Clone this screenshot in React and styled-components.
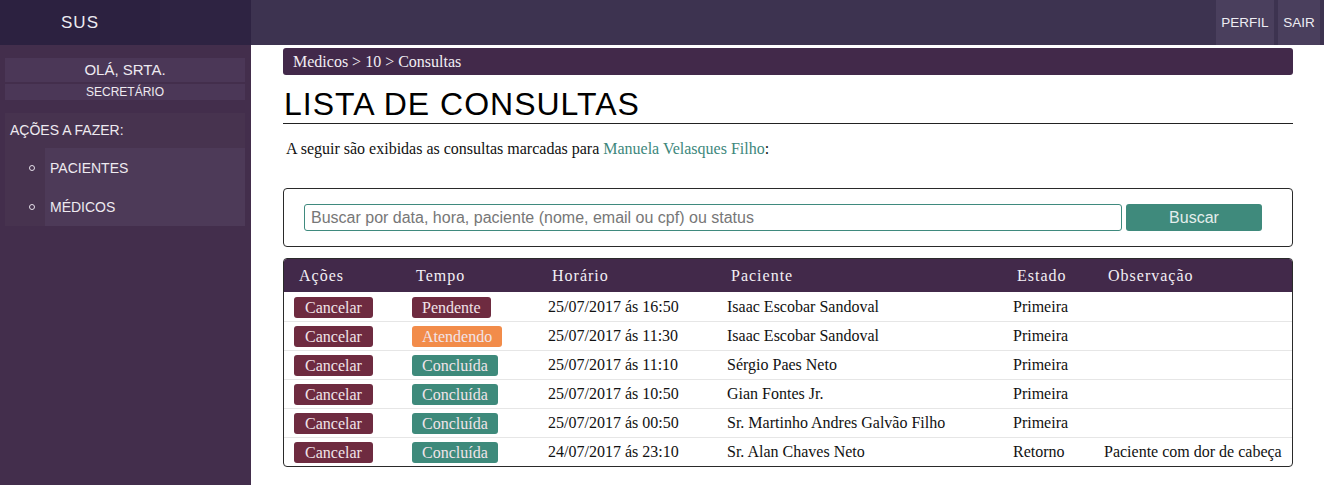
import React from 'react';
import styled, { createGlobalStyle } from 'styled-components';

const GlobalStyle = createGlobalStyle`
  body {
    margin: 0;
    background: #ffffff;
    font-family: "Liberation Serif", "Times New Roman", serif;
  }
`;

const Page = styled.div`
  display: flex;
  flex-direction: column;
  min-height: 485px;
`;

const TopBar = styled.div`
  display: flex;
  height: 45px;
  background: #3d3350;
`;

const Brand = styled.div`
  width: 160px;
  display: flex;
  align-items: center;
  justify-content: center;
  background: #2c2140;
  color: #ecebf2;
  font-family: "Liberation Sans", Arial, sans-serif;
  font-size: 17px;
  letter-spacing: 1px;
`;

const BrandFill = styled.div`
  width: 91px;
  background: #2e2342;
`;

const TopSpacer = styled.div`
  flex: 1;
`;

const TopLink = styled.div`
  display: flex;
  align-items: center;
  justify-content: center;
  width: ${p => p.$w}px;
  margin-left: ${p => p.$gap || 0}px;
  background: #4a3f5d;
  color: #eeedf3;
  font-family: "Liberation Sans", Arial, sans-serif;
  font-size: 13.5px;
`;

const TopEnd = styled.div`
  width: 4px;
`;

const Body = styled.div`
  display: flex;
  flex: 1;
`;

const Sidebar = styled.div`
  width: 251px;
  flex-shrink: 0;
  background: #432e4c;
  padding: 13px 6px 0 5px;
  box-sizing: border-box;
  display: flex;
  flex-direction: column;
  font-family: "Liberation Sans", Arial, sans-serif;
  color: #eeeaf0;
`;

const Greeting = styled.div`
  display: flex;
  flex-direction: column;
  gap: 2px;
  text-align: center;
`;

const GreetLine = styled.div`
  background: #4b3757;
  height: ${p => p.$h}px;
  line-height: ${p => p.$h}px;
  font-size: ${p => p.$size}px;
`;

const Actions = styled.div`
  margin-top: 13px;
  display: flex;
  flex-direction: column;
`;

const ActionsTitle = styled.div`
  background: #47334f;
  height: 35px;
  line-height: 35px;
  padding-left: 5px;
  font-size: 14px;
`;

const ActionItem = styled.div`
  display: flex;
  height: 39px;
  background: #47334f;
  font-size: 14px;
`;

const Bullet = styled.div`
  width: 40px;
  box-sizing: border-box;
  padding-left: 24px;
  display: flex;
  align-items: center;
  &::before {
    content: '';
    width: 4px;
    height: 4px;
    border: 1px solid #e6e0ea;
    border-radius: 50%;
  }
`;

const ItemLabel = styled.div`
  flex: 1;
  display: flex;
  align-items: center;
  background: #4d3a58;
  padding-left: 5px;
`;

const Main = styled.div`
  flex: 1;
  padding: 3px 31px 0 32px;
  display: flex;
  flex-direction: column;
`;

const Crumbs = styled.div`
  height: 27px;
  line-height: 27px;
  background: #42294a;
  border-radius: 3px;
  padding-left: 10px;
  color: #f2eef4;
  font-size: 16px;
`;

const Title = styled.h1`
  margin: 11px 0 0;
  padding: 0 0 1px 1px;
  font-family: "Liberation Sans", Arial, sans-serif;
  font-weight: normal;
  font-size: 32px;
  line-height: 36px;
  letter-spacing: 1px;
  color: #000;
  border-bottom: 1px solid #222;
`;

const Intro = styled.p`
  margin: 15px 0 0 3px;
  font-size: 16px;
  line-height: 19px;
  color: #111;
`;

const Link = styled.span`
  color: #3d877c;
`;

const SearchBox = styled.div`
  margin-top: 30px;
  border: 1px solid #2a2a2a;
  border-radius: 4px;
  padding: 15px 30px 15px 20px;
  display: flex;
  gap: 4px;
`;

const SearchInput = styled.input`
  flex: 1;
  height: 27px;
  box-sizing: border-box;
  border: 1px solid #3f8a7e;
  border-radius: 3px;
  padding: 0 6px;
  font-family: "Liberation Sans", Arial, sans-serif;
  font-size: 16px;
  color: #333;
  outline: none;
  &::placeholder {
    color: #777;
  }
`;

const SearchButton = styled.button`
  width: 136px;
  height: 27px;
  border: none;
  border-radius: 3px;
  background: #3f8a7c;
  color: #e4eeec;
  font-family: "Liberation Sans", Arial, sans-serif;
  font-size: 16px;
`;

const Table = styled.div`
  margin-top: 11px;
  border: 1px solid #2a2a2a;
  border-radius: 4px;
  overflow: hidden;
`;

const cols = '118px 136px 179px 286px 91px 1fr';

const HeadRow = styled.div`
  display: grid;
  grid-template-columns: ${cols};
  height: 33px;
  align-items: center;
  background: #42294a;
  color: #f3eff5;
  font-size: 16px;
  letter-spacing: 1px;
`;

const HeadCell = styled.div`
  padding-left: ${p => (p.$first ? 15 : 14)}px;
`;

const Row = styled.div`
  display: grid;
  grid-template-columns: ${cols};
  height: 28px;
  align-items: center;
  border-top: 1px solid ${p => (p.$first ? 'transparent' : '#e6e6e6')};
  font-size: 16px;
  color: #111;
`;

const Cell = styled.div`
  padding-left: 10px;
  white-space: nowrap;
`;

const Tag = styled.span`
  display: inline-block;
  height: 21px;
  line-height: 21px;
  padding: 0 ${p => p.$pad || 10}px;
  border-radius: 3px;
  background: ${p => p.$bg};
  color: #f1e4e9;
  font-size: 16px;
`;

const statusColors = {
  Pendente: '#6e2b40',
  Atendendo: '#f28c4a',
  'Concluída': '#3e8a7b',
};

const rows = [
  ['Pendente', '25/07/2017 ás 16:50', 'Isaac Escobar Sandoval', 'Primeira', ''],
  ['Atendendo', '25/07/2017 ás 11:30', 'Isaac Escobar Sandoval', 'Primeira', ''],
  ['Concluída', '25/07/2017 ás 11:10', 'Sérgio Paes Neto', 'Primeira', ''],
  ['Concluída', '25/07/2017 ás 10:50', 'Gian Fontes Jr.', 'Primeira', ''],
  ['Concluída', '25/07/2017 ás 00:50', 'Sr. Martinho Andres Galvão Filho', 'Primeira', ''],
  ['Concluída', '24/07/2017 ás 23:10', 'Sr. Alan Chaves Neto', 'Retorno', 'Paciente com dor de cabeça'],
];

const headers = ['Ações', 'Tempo', 'Horário', 'Paciente', 'Estado', 'Observação'];

export default function App() {
  return (
    <Page>
      <GlobalStyle />
      <TopBar>
        <Brand>SUS</Brand>
        <BrandFill />
        <TopSpacer />
        <TopLink $w={58}>PERFIL</TopLink>
        <TopLink $w={42} $gap={4}>SAIR</TopLink>
        <TopEnd />
      </TopBar>
      <Body>
        <Sidebar>
          <Greeting>
            <GreetLine $h={24} $size={15}>OLÁ, SRTA.</GreetLine>
            <GreetLine $h={16} $size={12}>SECRETÁRIO</GreetLine>
          </Greeting>
          <Actions>
            <ActionsTitle>AÇÕES A FAZER:</ActionsTitle>
            <ActionItem>
              <Bullet />
              <ItemLabel>PACIENTES</ItemLabel>
            </ActionItem>
            <ActionItem>
              <Bullet />
              <ItemLabel>MÉDICOS</ItemLabel>
            </ActionItem>
          </Actions>
        </Sidebar>
        <Main>
          <Crumbs>Medicos &gt; 10 &gt; Consultas</Crumbs>
          <Title>LISTA DE CONSULTAS</Title>
          <Intro>
            A seguir são exibidas as consultas marcadas para <Link>Manuela Velasques Filho</Link>:
          </Intro>
          <SearchBox>
            <SearchInput placeholder="Buscar por data, hora, paciente (nome, email ou cpf) ou status" />
            <SearchButton>Buscar</SearchButton>
          </SearchBox>
          <Table>
            <HeadRow>
              {headers.map((h, i) => (
                <HeadCell key={h} $first={i === 0}>{h}</HeadCell>
              ))}
            </HeadRow>
            {rows.map((r, i) => (
              <Row key={i} $first={i === 0}>
                <Cell><Tag $bg="#6e2b40" $pad={11}>Cancelar</Tag></Cell>
                <Cell><Tag $bg={statusColors[r[0]]} $pad={10}>{r[0]}</Tag></Cell>
                <Cell>{r[1]}</Cell>
                <Cell>{r[2]}</Cell>
                <Cell>{r[3]}</Cell>
                <Cell>{r[4]}</Cell>
              </Row>
            ))}
          </Table>
        </Main>
      </Body>
    </Page>
  );
}
